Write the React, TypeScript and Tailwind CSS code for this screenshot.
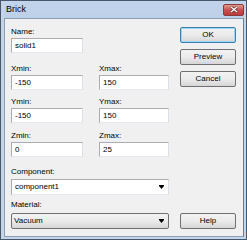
import React from "react";

const font = { fontFamily: '"Liberation Sans", Arial, sans-serif' };

function Arrow() {
  return (
    <svg width="5" height="4" viewBox="0 0 5 4" className="block">
      <rect x="0" y="0" width="5" height="1" fill="#000" />
      <path d="M0 1 L5 1 L2.5 4 Z" fill="#000" />
    </svg>
  );
}

function Field({ value, w }: { value: string; w: string }) {
  return (
    <div
      className={`${w} h-[15px] bg-white border border-[#abadb3] border-r-[#dbdfe6] border-b-[#e3e9ef] flex items-center pl-[3px] text-[8px] text-black`}
    >
      {value}
    </div>
  );
}

function Btn({ label, def }: { label: string; def?: boolean }) {
  return (
    <div
      className={`w-[56px] h-[16px] rounded-[2px] border ${
        def ? "border-[#3c7fb1] shadow-[inset_0_0_0_1px_#9ed6f5]" : "border-[#707070]"
      } bg-gradient-to-b from-[#f2f2f2] via-[#ebebeb] to-[#d6d6d6] flex items-center justify-center text-[8px] text-black`}
    >
      {label}
    </div>
  );
}

export default function App() {
  return (
    <div
      style={font}
      className="w-[247px] h-[240px] flex flex-col border border-[#48566a] bg-[#c4d5ea] pl-[3px] pr-[2px] pb-[2px]"
    >
      <div className="h-[17px] flex items-center justify-between bg-gradient-to-b from-[#c2d4eb] to-[#bcd0e8]">
        <span className="text-[9px] text-black pl-[2px] leading-none">Brick</span>
        <div className="w-[21px] h-[12px] rounded-[2px] border border-[#8a3a3a] bg-gradient-to-b from-[#e09a90] via-[#c75050] to-[#b93a3a] flex items-center justify-center">
          <svg width="8" height="7" viewBox="0 0 8 7">
            <path d="M1 1 L7 6 M7 1 L1 6" stroke="#5a2020" strokeWidth="2.6" />
            <path d="M1 1 L7 6 M7 1 L1 6" stroke="#fff" strokeWidth="1.5" />
          </svg>
        </div>
      </div>
      <div className="flex-1 flex bg-[#f0f0f0] border border-[#8e9eb4] border-r-[#3a8ad0] pl-[6px] pr-[7px] pt-[7px] pb-[7px]">
        <div className="w-[158px] flex flex-col text-[8px] text-black">
          <div className="h-[12px] leading-[12px]">Name:</div>
          <Field value="solid1" w="w-[72px]" />

          <div className="flex gap-[16px] mt-[10px]">
            <div className="flex flex-col">
              <div className="h-[12px] leading-[12px]">Xmin:</div>
              <Field value="-150" w="w-[72px]" />
            </div>
            <div className="flex flex-col">
              <div className="h-[12px] leading-[12px]">Xmax:</div>
              <Field value="150" w="w-[70px]" />
            </div>
          </div>

          <div className="flex gap-[16px] mt-[6px]">
            <div className="flex flex-col">
              <div className="h-[12px] leading-[12px]">Ymin:</div>
              <Field value="-150" w="w-[72px]" />
            </div>
            <div className="flex flex-col">
              <div className="h-[12px] leading-[12px]">Ymax:</div>
              <Field value="150" w="w-[70px]" />
            </div>
          </div>

          <div className="flex gap-[16px] mt-[7px]">
            <div className="flex flex-col">
              <div className="h-[12px] leading-[12px]">Zmin:</div>
              <Field value="0" w="w-[72px]" />
            </div>
            <div className="flex flex-col">
              <div className="h-[12px] leading-[12px]">Zmax:</div>
              <Field value="25" w="w-[70px]" />
            </div>
          </div>

          <div className="h-[12px] leading-[12px] mt-[9px]">Component:</div>
          <div className="mt-[1px] w-[158px] h-[16px] bg-white border border-[#abadb3] border-r-[#dbdfe6] border-b-[#e3e9ef] flex items-center justify-between pl-[3px] pr-[4px]">
            <span>component1</span>
            <Arrow />
          </div>

          <div className="h-[12px] leading-[12px] mt-[4px]">Material:</div>
          <div className="mt-[2px] w-[158px] h-[16px] rounded-[2px] border border-[#707070] bg-gradient-to-b from-[#f2f2f2] via-[#ebebeb] to-[#d6d6d6] flex items-center justify-between pl-[2px] pr-[4px]">
            <span>Vacuum</span>
            <Arrow />
          </div>
        </div>
        <div className="ml-[11px] flex flex-col gap-[6px] pt-[1px]">
          <Btn label="OK" def />
          <Btn label="Preview" />
          <Btn label="Cancel" />
          <div className="mt-auto">
            <Btn label="Help" />
          </div>
        </div>
      </div>
    </div>
  );
}
